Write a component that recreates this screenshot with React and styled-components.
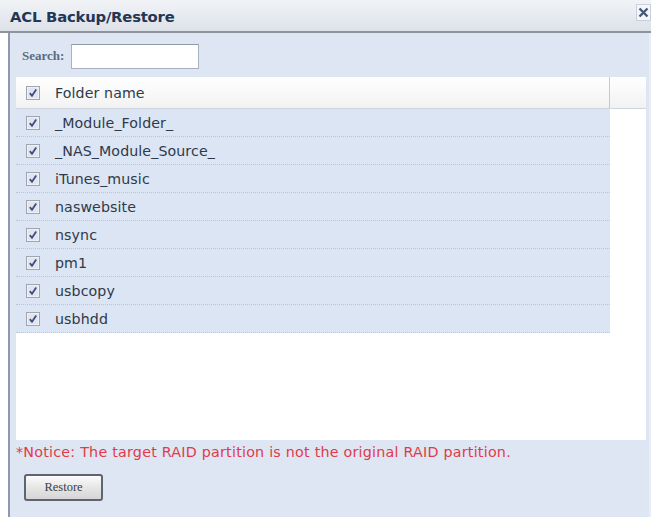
import React from 'react';
import styled, { createGlobalStyle } from 'styled-components';

const GlobalStyle = createGlobalStyle`
  html, body {
    margin: 0;
    padding: 0;
    background: #ffffff;
  }
  body {
    font-family: "DejaVu Sans", "Liberation Sans", sans-serif;
  }
`;

const folders = [
  '_Module_Folder_',
  '_NAS_Module_Source_',
  'iTunes_music',
  'naswebsite',
  'nsync',
  'pm1',
  'usbcopy',
  'usbhdd',
];

const Dialog = styled.div`
  width: 651px;
  height: 517px;
  display: flex;
  flex-direction: column;
  overflow: hidden;
`;

const TitleBar = styled.div`
  height: 31px;
  flex: none;
  display: flex;
  align-items: center;
  justify-content: space-between;
  padding: 0 0 0 10px;
  background: linear-gradient(#f1f3f6, #dde2e9);
  border-bottom: 2px solid #8e949c;
`;

const Title = styled.h1`
  margin: 0;
  font-size: 14.8px;
  font-weight: bold;
  color: #233656;
  letter-spacing: -0.2px;
  margin-top: 1px;
`;

const CloseButton = styled.button`
  width: 15px;
  height: 17px;
  padding: 0;
  border: 1px solid #c7d0dc;
  background: #f4f6f9;
  display: flex;
  align-items: center;
  justify-content: center;
  margin-top: -6px;
`;

const Body = styled.div`
  flex: 1;
  margin-left: 8px;
  border-left: 2px solid #8d9aad;
  border-right: 2px solid #e9eef5;
  background: #dde6f2;
  display: flex;
  flex-direction: column;
  padding: 0 3px 0 6px;
`;

const SearchRow = styled.div`
  height: 42px;
  display: flex;
  align-items: center;
  gap: 7px;
  padding-left: 6px;
  flex: none;
  padding-top: 2px;
`;

const SearchLabel = styled.label`
  font-family: "Liberation Serif", serif;
  font-size: 13px;
  font-weight: bold;
  color: #5a6a82;
`;

const SearchInput = styled.input`
  width: 122px;
  height: 21px;
  box-sizing: content-box;
  border: 1px solid #a7b1bf;
  border-top-color: #8f9aaa;
  background: #fff;
  padding: 1px 2px;
  margin: 0;
`;

const Grid = styled.div`
  height: 363px;
  flex: none;
  background: #ffffff;
  display: flex;
  flex-direction: column;
`;

const HeaderRow = styled.div`
  height: 31px;
  display: flex;
  align-items: center;
  background: linear-gradient(#ffffff, #f1f2f1);
  border-bottom: 1px solid #cdd4dd;
`;

const NameCell = styled.div`
  width: 594px;
  height: 100%;
  display: flex;
  align-items: center;
  border-right: 1px solid #c8c8c8;
  box-sizing: border-box;
`;

const CheckCell = styled.div`
  width: 30px;
  flex: none;
  display: flex;
  justify-content: center;
  padding-left: 2px;
`;

const Label = styled.span`
  font-size: 14.2px;
  color: #2e3a4a;
  padding-left: 7px;
  letter-spacing: 0.1px;
`;

const Row = styled.div`
  height: 27px;
  width: 594px;
  display: flex;
  align-items: center;
  background: #dce5f3;
  border-bottom: 1px dotted #b9c4d4;
`;

const Notice = styled.p`
  margin: 0;
  height: 22px;
  padding-top: 1px;
  display: flex;
  align-items: center;
  font-size: 14.3px;
  color: #e23a48;
  letter-spacing: 0.22px;
  white-space: nowrap;
`;

const Footer = styled.div`
  padding: 11px 0 0 8px;
`;

const RestoreButton = styled.button`
  width: 79px;
  height: 27px;
  border: 2px solid #5d6670;
  border-radius: 3px;
  background: linear-gradient(#fbfbfb, #e4e4e4 55%, #d6d6d6);
  font-family: "Liberation Serif", serif;
  font-size: 12.5px;
  color: #3a3f48;
  padding: 0;
`;

const Check = () => (
  <svg width="14" height="14" viewBox="0 0 14 14">
    <rect x="0.5" y="0.5" width="13" height="13" fill="#eef0f4" stroke="#9ea6b1" />
    <rect x="2" y="2" width="10" height="10" fill="#e2e5ec" />
    <path d="M3.8 7.2 L6 9.8 L10.2 3.6" fill="none" stroke="#3c4a8a" strokeWidth="1.8" />
  </svg>
);

const CloseIcon = () => (
  <svg width="11" height="11" viewBox="0 0 11 11">
    <path d="M1.5 1.5 L9.5 9.5 M9.5 1.5 L1.5 9.5" stroke="#45597a" strokeWidth="2.4" />
  </svg>
);

export default function App() {
  return (
    <>
      <GlobalStyle />
      <Dialog>
        <TitleBar>
          <Title>ACL Backup/Restore</Title>
          <CloseButton aria-label="close">
            <CloseIcon />
          </CloseButton>
        </TitleBar>
        <Body>
          <SearchRow>
            <SearchLabel>Search:</SearchLabel>
            <SearchInput />
          </SearchRow>
          <Grid>
            <HeaderRow>
              <NameCell>
                <CheckCell>
                  <Check />
                </CheckCell>
                <Label>Folder name</Label>
              </NameCell>
            </HeaderRow>
            {folders.map((name) => (
              <Row key={name}>
                <CheckCell>
                  <Check />
                </CheckCell>
                <Label>{name}</Label>
              </Row>
            ))}
          </Grid>
          <Notice>*Notice: The target RAID partition is not the original RAID partition.</Notice>
          <Footer>
            <RestoreButton>Restore</RestoreButton>
          </Footer>
        </Body>
      </Dialog>
    </>
  );
}
